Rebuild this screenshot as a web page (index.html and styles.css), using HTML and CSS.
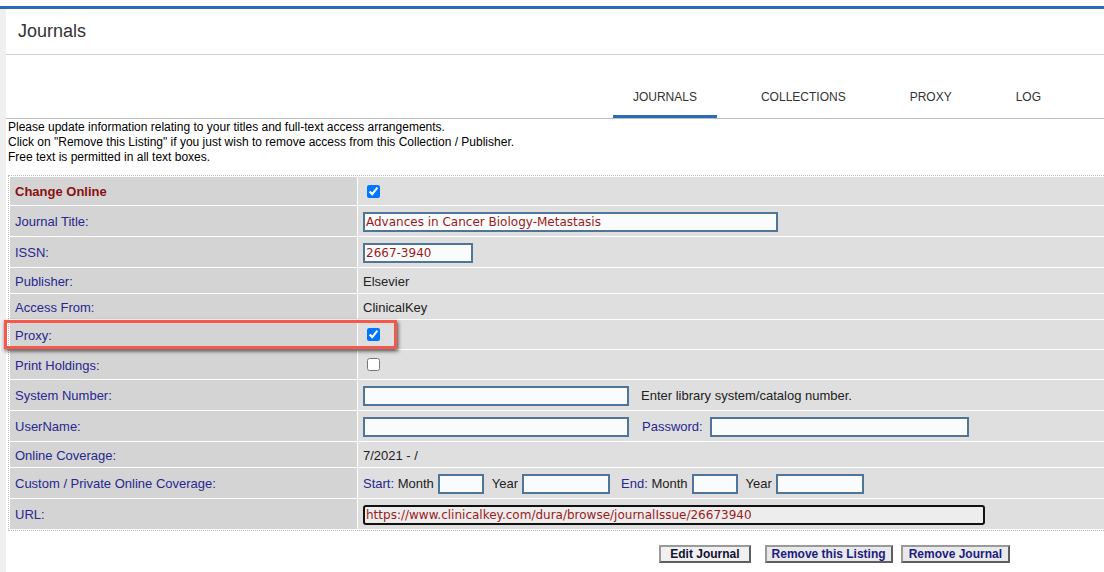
FILE: index.html
```html
<!DOCTYPE html>
<html>
<head>
    <meta http-equiv="Content-Type" content="text/html; charset=UTF-8">
    <title>Journals</title>
    <link rel="stylesheet" href="styles.css">
</head>

<body>
    <div class="topline"></div>
    <div class="frame">
        <div class="rail"></div>
        <div class="main">
            <div class="header">Journals</div>

            <div class="tabs">
                <div class="tab active">JOURNALS</div>
                <div class="tab">COLLECTIONS</div>
                <div class="tab">PROXY</div>
                <div class="tab">LOG</div>
            </div>

            <div class="intro">
                Please update information relating to your titles and full-text access arrangements.<br>
                Click on "Remove this Listing" if you just wish to remove access from this Collection / Publisher.<br>
                Free text is permitted in all text boxes.
            </div>

            <table class="journal">
                <tr class="r28">
                    <td class="label change">Change Online</td>
                    <td class="value"><input type="checkbox" checked></td>
                </tr>
                <tr class="r30">
                    <td class="label">Journal Title:</td>
                    <td class="value"><input type="text" class="field title" value="Advances in Cancer Biology-Metastasis"></td>
                </tr>
                <tr class="r30">
                    <td class="label">ISSN:</td>
                    <td class="value"><input type="text" class="field issn" value="2667-3940"></td>
                </tr>
                <tr class="r25">
                    <td class="label">Publisher:</td>
                    <td class="value">Elsevier</td>
                </tr>
                <tr class="r25">
                    <td class="label">Access From:</td>
                    <td class="value">ClinicalKey</td>
                </tr>
                <tr class="r29">
                    <td class="label marked">Proxy:<div class="highlight"></div></td>
                    <td class="value"><input type="checkbox" checked></td>
                </tr>
                <tr class="r29">
                    <td class="label">Print Holdings:</td>
                    <td class="value"><input type="checkbox"></td>
                </tr>
                <tr class="r30">
                    <td class="label">System Number:</td>
                    <td class="value">
                        <div class="line">
                            <input type="text" class="field wide">
                            <span class="note">Enter library system/catalog number.</span>
                        </div>
                    </td>
                </tr>
                <tr class="r30">
                    <td class="label">UserName:</td>
                    <td class="value">
                        <div class="line">
                            <input type="text" class="field wide">
                            <span class="key pwd">Password:</span>
                            <input type="text" class="field password">
                        </div>
                    </td>
                </tr>
                <tr class="r25">
                    <td class="label">Online Coverage:</td>
                    <td class="value">7/2021 - /</td>
                </tr>
                <tr class="r30">
                    <td class="label">Custom / Private Online Coverage:</td>
                    <td class="value">
                        <div class="line">
                            <span class="key">Start:</span>&nbsp;Month
                            <input type="text" class="field month">
                            <span class="gap">Year</span>
                            <input type="text" class="field year">
                            <span class="key end">End:</span>&nbsp;Month
                            <input type="text" class="field month">
                            <span class="gap">Year</span>
                            <input type="text" class="field year">
                        </div>
                    </td>
                </tr>
                <tr class="r30">
                    <td class="label">URL:</td>
                    <td class="value"><input type="text" class="field url" value="https://www.clinicalkey.com/dura/browse/journalIssue/26673940"></td>
                </tr>
            </table>

            <div class="actions">
                <button class="btn edit">Edit Journal</button>
                <button class="btn listing">Remove this Listing</button>
                <button class="btn remove">Remove Journal</button>
            </div>
        </div>
    </div>
</body>

</html>
```

FILE: styles.css
```css
html, body {
    margin: 0;
    padding: 0;
    overflow: hidden;
}

body {
    font-family: "Liberation Sans", Arial, sans-serif;
    background: #fff;
    color: #000;
}

.topline {
    margin-top: 6px;
    height: 3px;
    background: #2b6cb5;
}

.frame {
    display: flex;
    height: 563px;
}

.rail {
    width: 6px;
    flex: none;
    background: #f0f0f0;
}

.main {
    flex: 1;
    min-width: 0;
}

.header {
    height: 45px;
    line-height: 45px;
    padding-left: 12px;
    font-size: 18px;
    color: #333;
    border-bottom: 1px solid #cfcfcf;
}

.tabs {
    display: flex;
    justify-content: flex-end;
    align-items: flex-end;
    gap: 24px;
    height: 63px;
    padding-right: 43px;
    border-bottom: 1px solid #bdbdbd;
}

.tab {
    height: 37px;
    line-height: 39px;
    padding: 0 20px;
    font-size: 12px;
    color: #333;
    border-bottom: 3px solid transparent;
}

.tab.active {
    border-bottom-color: #2b6cb5;
}

.intro {
    padding: 1px 0 0 2px;
    font-size: 12px;
    line-height: 15px;
}

.journal {
    margin: 10px 0 0 2px;
    width: 1110px;
    border: 1px dotted #bbb;
    border-spacing: 1px;
    font-size: 13px;
}

.r25 { height: 25px; }
.r28 { height: 28px; }
.r29 { height: 29px; }
.r30 { height: 30px; }

.journal td {
    padding: 1px 5px 0;
    vertical-align: middle;
}

.label {
    width: 337px;
    background: #d4d4d4;
    color: #27278f;
}

.label.change {
    color: #8b1010;
    font-weight: bold;
}

.label.marked {
    position: relative;
}

.highlight {
    position: absolute;
    left: -6px;
    top: 0;
    width: 393px;
    height: 29px;
    box-sizing: border-box;
    border: 3px solid #f4594b;
    box-shadow: 1px 2px 4px rgba(0, 0, 0, 0.7);
}

.value {
    background: #dfdfdf;
    color: #222;
}

.value input[type=checkbox] {
    vertical-align: middle;
    margin: 0 3px 2px 4px;
}

.line {
    display: flex;
    align-items: center;
    white-space: nowrap;
}

.field {
    box-sizing: border-box;
    height: 20px;
    padding: 1px 1px 0;
    border: 2px solid #4f7699;
    background: #fafbfc;
    font-family: "DejaVu Sans", Verdana, sans-serif;
    font-size: 12px;
    color: #9b1b1b;
    vertical-align: middle;
}

.title { width: 415px; }
.issn { width: 110px; }
.wide { width: 266px; }
.password { width: 259px; }

.month {
    width: 46px;
    margin-left: 4px;
}

.year {
    width: 88px;
    margin-left: 4px;
}

.url {
    width: 622px;
    border: 2px solid #111;
    border-radius: 3px;
    background: #ededed;
}

.note {
    margin-left: 12px;
}

.key {
    color: #27278f;
}

.pwd {
    margin: 0 7px 0 13px;
}

.gap {
    margin-left: 8px;
}

.end {
    margin-left: 11px;
}

.actions {
    display: flex;
    justify-content: flex-end;
    margin-top: 14px;
    padding-right: 94px;
}

.btn {
    box-sizing: border-box;
    height: 18px;
    padding: 0 5px;
    font-family: "Liberation Sans", Arial, sans-serif;
    font-size: 12px;
    font-weight: bold;
    color: #1c1c80;
    background: #e9e9ec;
    border: 2px solid;
    border-color: #9a9a9a #5e5e5e #5e5e5e #9a9a9a;
    margin-left: 8px;
}

.btn.edit {
    padding: 0 9px;
    color: #111133;
    background: #f0f0f0;
}

.btn.listing {
    margin-left: 14px;
}

.btn.remove {
    padding: 0 6px;
}
```
